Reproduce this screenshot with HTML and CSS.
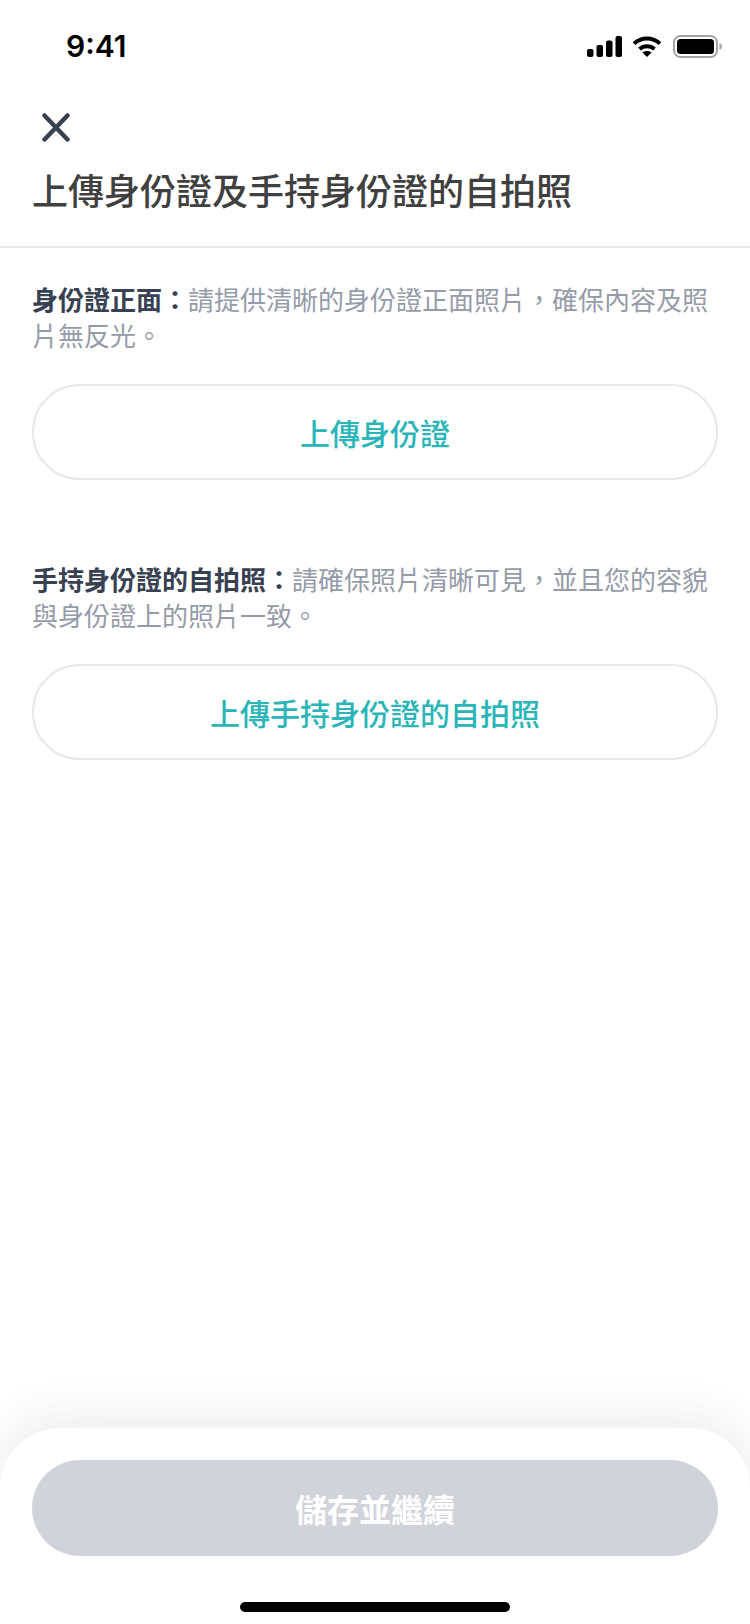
FILE: index.html
```html
<!DOCTYPE html>
<html lang="zh-Hant">

<head>
  <meta charset="UTF-8">
  <meta name="viewport" content="width=device-width, initial-scale=1.0">
  <title>上傳身份證</title>
  <link rel="stylesheet" href="styles.css">
</head>

<body>
  <div class="page">
    <div class="status-bar">
      <span class="time">9:41</span>
      <div class="status-icons">
        <svg class="icon-signal" width="35" height="21" viewBox="0 0 35 21" fill="#000">
          <rect x="0" y="13" width="6.5" height="8" rx="2"></rect>
          <rect x="9.5" y="9" width="6.5" height="12" rx="2"></rect>
          <rect x="19" y="4.5" width="6.5" height="16.5" rx="2"></rect>
          <rect x="28.5" y="0" width="6.5" height="21" rx="2"></rect>
        </svg>
        <svg class="icon-wifi" width="31" height="21" viewBox="0 0 31 21" fill="none" stroke="#000" stroke-width="4">
          <path d="M2 7.6C9.4 .8 20.6 .8 28 7.6"></path>
          <path d="M7.5 13C11.8 9.2 18.2 9.2 22.5 13"></path>
          <path d="M15 21L10.4 16.4C13 14.4 17 14.4 19.6 16.4Z" fill="#000" stroke="none"></path>
        </svg>
        <svg class="icon-battery" width="49" height="23" viewBox="0 0 49 23" fill="none">
          <rect x="1" y="1" width="43" height="21" rx="6.5" stroke="#a3a3a3" stroke-width="2"></rect>
          <rect x="4" y="4" width="37" height="15" rx="3.5" fill="#000"></rect>
          <path d="M46.5 8C48 8.500 49 10 49 11.500C49 13 48 14.500 46.500 15Z" fill="#a3a3a3"></path>
        </svg>
      </div>
    </div>

    <div class="header">
      <svg class="icon-close" width="28" height="29" viewBox="0 0 28 29" fill="none" stroke="#374151" stroke-width="4.500" stroke-linecap="round">
        <path d="M2.500 2.500L25.500 26.500"></path>
        <path d="M25.500 2.500L2.500 26.500"></path>
      </svg>
      <h1 class="title">上傳身份證及手持身份證的自拍照</h1>
    </div>

    <div class="content">
      <div class="block">
        <p class="desc"><b>身份證正面：</b>請提供清晰的身份證正面照片，確保內容及照片無反光。</p>
        <div class="upload-btn">上傳身份證</div>
      </div>
      <div class="block">
        <p class="desc"><b>手持身份證的自拍照：</b>請確保照片清晰可見，並且您的容貌與身份證上的照片一致。</p>
        <div class="upload-btn">上傳手持身份證的自拍照</div>
      </div>
    </div>

    <div class="footer">
      <div class="save-btn">儲存並繼續</div>
      <div class="home-bar"></div>
    </div>
  </div>
</body>

</html>
```

FILE: styles.css
```css
* {
  box-sizing: border-box;
}

body {
  margin: 0;
  background-color: #fff;
  font-family: "Noto Sans CJK TC", "Noto Sans", sans-serif;
}

h1,
p {
  margin: 0;
}

.page {
  display: flex;
  flex-direction: column;
  height: 1624px;
  overflow: hidden;
}

.status-bar {
  display: flex;
  justify-content: space-between;
  align-items: center;
  height: 92px;
  padding: 0 28px 0 66px;
}

.time {
  font-family: Inter, sans-serif;
  font-size: 30px;
  font-weight: 600;
  color: #000;
}

.status-icons {
  display: flex;
  align-items: center;
  gap: 10px;
}

.header {
  padding: 21px 32px 33px;
  border-bottom: 2px solid #e5e7eb;
}

.icon-close {
  display: block;
  margin-left: 10px;
}

.title {
  margin-top: 23px;
  font-size: 36px;
  line-height: 48px;
  font-weight: 500;
  color: #404040;
}

.content {
  padding: 33px 32px 0;
}

.block {
  margin-bottom: 81px;
}

.desc {
  font-size: 26px;
  line-height: 36px;
  color: #959ba8;
}

.desc b {
  font-weight: 700;
  color: #374151;
}

.upload-btn {
  display: flex;
  justify-content: center;
  align-items: center;
  height: 96px;
  margin-top: 31px;
  border: 2px solid #e5e7eb;
  border-radius: 48px;
  font-size: 30px;
  font-weight: 500;
  color: #2bb5b8;
}

.footer {
  margin-top: auto;
  height: 196px;
  padding: 32px 32px 0;
  background-color: #fff;
  border-radius: 60px 60px 0 0;
  box-shadow: 0 -10px 48px rgba(55, 65, 81, 0.1);
}

.save-btn {
  display: flex;
  justify-content: center;
  align-items: center;
  height: 96px;
  border-radius: 48px;
  background-color: #d1d3db;
  font-size: 32px;
  font-weight: 700;
  color: #fff;
}

.home-bar {
  width: 270px;
  height: 10px;
  margin: 46px auto 0;
  border-radius: 5px;
  background-color: #000;
}
```
